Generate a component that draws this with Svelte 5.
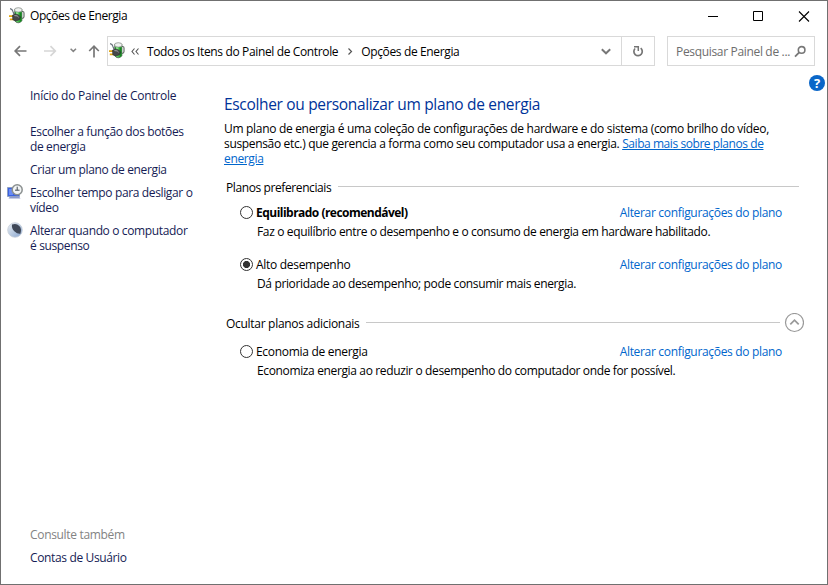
<script>
  const tasks = [
    { lines: ['Escolher a função dos botões', 'de energia'], icon: '' },
    { lines: ['Criar um plano de energia'], icon: '' },
    { lines: ['Escolher tempo para desligar o', 'vídeo'], icon: 'clock' },
    { lines: ['Alterar quando o computador', 'é suspenso'], icon: 'moon' },
  ];
  const preferred = [
    { name: 'Equilibrado (recomendável)', desc: 'Faz o equilíbrio entre o desempenho e o consumo de energia em hardware habilitado.', bold: true },
    { name: 'Alto desempenho', desc: 'Dá prioridade ao desempenho; pode consumir mais energia.', on: true },
  ];
  const extra = [
    { name: 'Economia de energia', desc: 'Economiza energia ao reduzir o desempenho do computador onde for possível.' },
  ];
</script>

{#snippet power()}
  <svg class="power" width="16" height="17" viewBox="0 0 16 17">
    <path d="M12.3 4.500h1.400q1.300 0 1.300 1.500v3.500q0 1.600-2 2" fill="none" stroke="#68706b" stroke-width="1.200" />
    <path d="M5.700 2.300h7.200v11.500q-1.200 2-3.600 2t-3.600-2z" fill="#30ad38" stroke="#4b5a4e" stroke-width=".7" />
    <path d="M7 5h2.500v9.500H7z" fill="#8be28b" />
    <path d="M10.900 5.500h1.500v8.500l-1.500 1z" fill="#168622" />
    <ellipse cx="9.300" cy="2.900" rx="3.800" ry="2.200" fill="#eef1ef" stroke="#7e8580" stroke-width=".7" />
    <path d="M1 1.600q2.400.3 2.900 2.800l1.100 2.800" fill="none" stroke="#66707a" stroke-width="1.200" />
    <path d="M0 9.200h4M.8 12.300h4" stroke="#e3a812" stroke-width="1.700" />
    <path d="M3.500 8.200l2.800-1.300 3.300 1 2 2.300-1.400 2.700-3.400 1.100-3-1.200z" fill="#454748" stroke="#262a2b" stroke-width=".6" />
    <path d="M5.400 8.600l2.800.3 1.400 1.300" fill="none" stroke="#a5a5a5" />
  </svg>
{/snippet}

{#snippet plan(p)}
  <div class="plan">
    <div class="row">
      <span class="radio" class:on={p.on}></span>
      <span class="name" class:bold={p.bold}>{p.name}</span>
      <a class="change" href="#plan">Alterar configurações do plano</a>
    </div>
    <p class="desc">{p.desc}</p>
  </div>
{/snippet}

<div class="window">
  <header class="title">
    {@render power()}
    <span class="caption">Opções de Energia</span>
    <svg class="controls" width="110" height="20" viewBox="0 0 110 20">
      <path d="M7 10.500h10M52.500 5.500h9v9h-9z" fill="none" stroke="#000" />
      <path d="M98 5.500l10 10m0-10l-10 10" stroke="#000" stroke-width="1.100" />
    </svg>
  </header>

  <nav class="bar">
    <svg class="arrows" width="106" height="30" viewBox="0 0 106 30">
      <g fill="none" stroke-width="1.700">
        <path d="M25.500 15H14.300M19 10.200L14.200 15l4.800 4.800" stroke="#777" />
        <path d="M43 15h11.200M49.500 10.200L54.300 15l-4.800 4.800" stroke="#d6d6d6" />
        <path d="M69.600 12.700l2.700 2.700 2.700-2.700" stroke="#858585" stroke-width="1.500" />
        <path d="M93 21.500V10.300M88.200 15l4.800-4.800 4.800 4.800" stroke="#777" />
      </g>
    </svg>
    <div class="address">
      {@render power()}
      <svg class="chev" width="8" height="9" viewBox="0 0 8 9"><path d="M3.500 1.500L1 4.500l2.500 3M7.500 1.500L5 4.500l2.500 3" fill="none" stroke="#555" stroke-width="1.100" /></svg>
      <span class="crumb first">Todos os Itens do Painel de Controle</span>
      <svg class="sep" width="6" height="9" viewBox="0 0 6 9"><path d="M1.500 1.500l3 3-3 3" fill="none" stroke="#555" stroke-width="1.200" /></svg>
      <span class="crumb second">Opções de Energia</span>
      <svg class="drop" width="12" height="9" viewBox="0 0 12 9"><path d="M1.800 2.200L6 6.300l4.200-4.100" fill="none" stroke="#777" stroke-width="1.900" /></svg>
      <div class="refresh">
        <svg width="12" height="13" viewBox="0 0 12 13">
          <path d="M8.700 3.200A4.200 4.200 0 1 1 3.100 3.500" fill="none" stroke="#757575" stroke-width="1.700" />
          <path d="M2 1.700h4.300v4.300" fill="none" stroke="#757575" stroke-width="1.500" />
        </svg>
      </div>
    </div>
    <div class="search">
      <span class="hint">Pesquisar Painel de ...</span>
      <svg width="12" height="13" viewBox="0 0 12 13"><circle cx="7.600" cy="4.900" r="3.300" fill="none" stroke="#777" stroke-width="1.600" /><path d="M5.200 7.400L1 11.600" stroke="#777" stroke-width="1.800" /></svg>
    </div>
  </nav>

  <div class="body">
    <aside>
      <a class="home" href="#home">Início do Painel de Controle</a>
      {#each tasks as t}
        <a class="task" href="#task">
          <span class="ico">
            {#if t.icon === 'clock'}
              <svg width="16" height="16" viewBox="0 0 16 16">
                <path d="M.5 3.500h12v9H.5z" fill="#3a62e0" stroke="#8f9fc4" />
                <path d="M2 5h4v6H2z" fill="#6a8cf5" />
                <path d="M1.500 14.500h12l-1.500-2H3z" fill="#8e9ccc" />
                <circle cx="10.200" cy="5.800" r="5" fill="#f3f5f5" stroke="#8b9090" stroke-width="1.500" />
                <path d="M10.200 2.700v3.500M8 6.200h4.500" fill="none" stroke="#444d58" />
              </svg>
            {:else if t.icon === 'moon'}
              <svg width="16" height="16" viewBox="0 0 16 16">
                <defs><linearGradient id="moon" x2="1" y2="1"><stop offset="0" stop-color="#eef2f6" /><stop offset=".5" stop-color="#b9cae0" /><stop offset="1" stop-color="#86a5d2" /></linearGradient></defs>
                <circle cx="8" cy="8" r="7.300" fill="url(#moon)" stroke="#c6ced8" stroke-width=".8" />
                <path d="M5 2.600Q9.500 1 12.300 4T13.400 11.700Q10.300 12 7.300 9.200T5 2.600z" fill="#3f4858" />
              </svg>
            {/if}
          </span>
          <span class="label">{#each t.lines as l}<span class="line">{l}</span>{/each}</span>
        </a>
      {/each}
      <div class="also">Consulte também</div>
      <a class="accounts" href="#accounts">Contas de Usuário</a>
    </aside>

    <main>
      <h1>Escolher ou personalizar um plano de energia</h1>
      <p class="intro">
        <span class="line l1">Um plano de energia é uma coleção de configurações de hardware e do sistema (como brilho do vídeo,</span>
        <span class="line l2">suspensão etc.) que gerencia a forma como seu computador usa a energia. <a href="#more">Saiba mais sobre planos de</a></span>
        <span class="line"><a href="#more">energia</a></span>
      </p>
      <div class="group"><span>Planos preferenciais</span><i></i></div>
      {#each preferred as p}{@render plan(p)}{/each}
      <div class="group more">
        <span>Ocultar planos adicionais</span><i></i>
        <svg width="20" height="20" viewBox="0 0 20 20"><circle cx="10.500" cy="9.500" r="9" fill="none" stroke="#999" stroke-width="1.200" /><path d="M6.300 11.300l4.200-4.200 4.200 4.200" fill="none" stroke="#999" stroke-width="1.700" /></svg>
      </div>
      {#each extra as p}{@render plan(p)}{/each}
    </main>
    <span class="help">?</span>
  </div>
</div>

<style>
  .window { box-sizing: border-box; width: 828px; height: 585px; border: 1px solid #707070; background: #fff; color: #000; font: 12px/15px "Open Sans", "Noto Sans", sans-serif; letter-spacing: -0.36px; white-space: nowrap; overflow: hidden; display: flex; flex-direction: column; }
  a { text-decoration: none; color: #0066cc; }
  p, h1 { margin: 0; font-weight: 400; }
  svg { flex: none; display: block; }
  .title { height: 29px; display: flex; align-items: center; padding-left: 8px; flex: none; }
  .caption { margin-left: 5px; letter-spacing: -0.42px; }
  .controls { margin-left: auto; margin-right: 16px; }
  .bar { height: 30px; margin-top: 6px; display: flex; align-items: center; flex: none; padding-right: 12px; }
  .address { box-sizing: border-box; width: 548px; height: 30px; border: 1px solid #d9d9d9; display: flex; align-items: center; padding-left: 1px; }
  .address .power { margin-bottom: 2px; }
  .chev { margin-left: 6px; }
  .first { margin-left: 8px; }
  .sep { margin: 0 8px 0 9px; }
  .drop { margin-left: auto; margin-right: 9px; }
  .refresh { width: 32px; height: 28px; border-left: 1px solid #d9d9d9; display: flex; align-items: center; justify-content: center; }
  .search { box-sizing: border-box; margin-left: auto; width: 148px; height: 30px; border: 1px solid #d9d9d9; display: flex; align-items: center; justify-content: space-between; padding: 0 8px; color: #6d6d6d; }
  .hint { letter-spacing: -0.33px; }
  .body { position: relative; flex: 1; display: flex; min-height: 0; }
  aside { width: 223px; display: flex; flex-direction: column; padding: 22px 0 19px 6px; box-sizing: border-box; }
  aside a { color: #151c55; }
  .home { margin: 0 0 21px 23px; letter-spacing: -0.25px; }
  .task { display: flex; margin-bottom: 8px; }
  .ico { width: 23px; flex: none; }
  .ico svg { margin-top: -1px; }
  .label { display: flex; flex-direction: column; align-items: flex-start; }
  .line { display: block; width: max-content; }
  .also { margin: auto 0 8px 23px; color: #838383; letter-spacing: -0.32px; }
  .accounts { margin-left: 23px; }
  main { width: 580px; padding-top: 28px; display: flex; flex-direction: column; }
  h1 { font-size: 15.5px; line-height: 20px; color: #003399; letter-spacing: -0.33px; }
  .intro { margin-top: 7px; }
  .intro a { text-decoration: underline; }
  .l1 { letter-spacing: -0.31px; }
  .l2 { letter-spacing: -0.335px; }
  .l2 a { letter-spacing: -0.435px; }
  .group { display: flex; align-items: center; height: 20px; margin: 11px 5px 0 2px; letter-spacing: -0.4px; }
  .group i { flex: 1; height: 1px; background: #c8c8c8; margin: 0 0 1px 7px; }
  .more { margin: 12px 0 0 2px; letter-spacing: -0.29px; }
  .more svg { margin-left: 4px; }
  .plan { margin-top: 8px; margin-bottom: 10px; }
  .more + .plan { margin-top: 11px; }
  .row { display: flex; align-items: center; height: 15px; padding: 0 22px 0 16px; }
  .radio { box-sizing: border-box; width: 13px; height: 13px; border: 1px solid #333; border-radius: 50%; margin-right: 3px; }
  .on { background: radial-gradient(circle, #333 3.200px, #fff 3.900px); }
  .name { letter-spacing: -0.3px; }
  .bold { font-weight: 700; letter-spacing: -0.52px; }
  .change { margin-left: auto; letter-spacing: -0.32px; }
  .desc { margin: 4px 0 0 33px; }
  .help { position: absolute; right: 2px; top: 9px; width: 16px; height: 16px; border-radius: 50%; background: #0a66c8; color: #fff; font-weight: 700; font-size: 13px; line-height: 16px; text-align: center; letter-spacing: 0; }
</style>
